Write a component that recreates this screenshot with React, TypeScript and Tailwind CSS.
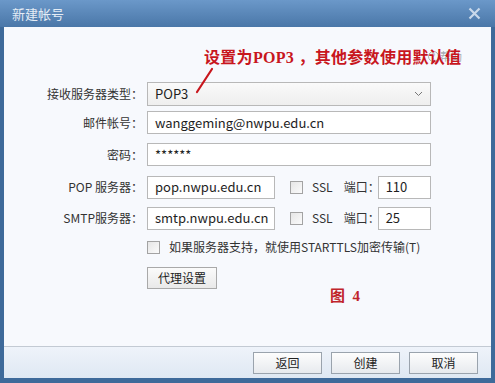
import React from 'react';

const cjk = { fontFamily: '"Noto Sans CJK SC", "Noto Sans", sans-serif' };
const serif = { fontFamily: '"Liberation Serif", "Noto Sans CJK SC", serif' };

function Checkbox() {
  return (
    <span className="inline-block w-[13px] h-[13px] border border-[#a3a3a3] bg-gradient-to-br from-[#e6e6e6] to-[#fbfbfb] shrink-0" />
  );
}

function Field({ value, className = '' }: { value: string; className?: string }) {
  return (
    <div
      className={`h-[23px] border border-[#b8b8b8] bg-white flex items-center px-[7px] text-[13px] text-[#1e1e1e] ${className}`}
    >
      {value}
    </div>
  );
}

function Label({ children }: { children: React.ReactNode }) {
  return (
    <div className="w-[143px] shrink-0 pr-[4px] text-right text-[12px] text-[#333]">{children}</div>
  );
}

function ServerRow({ label, host, port, className = '' }: { label: string; host: string; port: string; className?: string }) {
  return (
    <div className={`flex items-center ${className}`}>
      <Label>{label}</Label>
      <Field value={host} className="w-[128px]" />
      <div className="ml-[15px]">
        <Checkbox />
      </div>
      <span className="ml-[9px] text-[12px] text-[#333]">SSL</span>
      <span className="ml-[11px] text-[12px] text-[#333]">端口：</span>
      <Field value={port} className="-ml-[2px] w-[53px]" />
    </div>
  );
}

export default function App() {
  return (
    <div className="relative w-[495px] h-[383px] flex flex-col bg-[#3e6a9a] overflow-hidden" style={cjk}>
      <div className="h-[27px] shrink-0 flex items-center justify-between pl-[12px] pr-[14px] bg-gradient-to-b from-[#6b98c9] to-[#4a77a8]">
        <span className="text-[13px] text-[#e4ecf5]">新建帐号</span>
        <svg width="13" height="13" viewBox="0 0 13 13">
          <path d="M1.5 1.5 L11.5 11.5 M11.5 1.5 L1.5 11.5" stroke="#c9d8ea" strokeWidth="2.2" />
        </svg>
      </div>
      <div className="flex-1 mx-[4px] mb-[5px] flex flex-col">
        <div className="flex-1 bg-[#f7f9fd] pt-[55px]">
          <div className="flex items-center">
            <Label>接收服务器类型：</Label>
            <div className="w-[284px] h-[24px] border border-[#b8b8b8] bg-gradient-to-b from-[#fafafa] to-[#eeeeee] flex items-center justify-between px-[7px] text-[13px] text-[#1e1e1e]">
              <span>POP3</span>
              <svg width="9" height="6" viewBox="0 0 9 6">
                <path d="M1 1 L4.5 4.5 L8 1" fill="none" stroke="#777" strokeWidth="1" />
              </svg>
            </div>
          </div>
          <div className="flex items-center mt-[5px]">
            <Label>邮件帐号：</Label>
            <Field value="wanggeming@nwpu.edu.cn" className="w-[284px]" />
          </div>
          <div className="flex items-center mt-[9px]">
            <Label>密码：</Label>
            <Field value="******" className="w-[284px]" />
          </div>
          <ServerRow label="POP 服务器：" host="pop.nwpu.edu.cn" port="110" className="mt-[9px]" />
          <ServerRow label="SMTP服务器：" host="smtp.nwpu.edu.cn" port="25" className="mt-[7px]" />
          <div className="flex items-center mt-[8px] pl-[143px]">
            <Checkbox />
            <span className="ml-[9px] text-[12px] text-[#333]">如果服务器支持，就使用STARTTLS加密传输(T)</span>
          </div>
          <div className="pl-[143px] mt-[11px]">
            <div className="w-[70px] h-[22px] border border-[#a9a9a9] bg-gradient-to-b from-[#fbfbfb] to-[#e9e9e9] flex items-center justify-center text-[12px] text-[#222]">
              代理设置
            </div>
          </div>
        </div>
        <div className="h-[32px] shrink-0 border-t border-[#c3cad3] bg-gradient-to-b from-[#eef3fa] to-[#dfe8f3] flex items-center justify-end gap-[9px] pr-[13px]">
          {['返回', '创建', '取消'].map((t) => (
            <div
              key={t}
              className="w-[69px] h-[22px] border border-[#9aa3ad] bg-gradient-to-b from-[#fdfdfd] to-[#e7eaee] flex items-center justify-center text-[12px] text-[#222]"
            >
              {t}
            </div>
          ))}
        </div>
      </div>

      {/* help link, partly covered by the annotation */}
      <div className="absolute left-[428px] top-[48px] flex items-center gap-[1px] text-[11px] text-[#a7aeb6]">
        <span className="w-[11px] h-[11px] rounded-full border border-[#a7aeb6] flex items-center justify-center text-[8px] leading-none">?</span>
        <span>帮助</span>
      </div>
      {/* annotation */}
      <div className="absolute left-[204px] top-[46px] text-[16px] font-bold text-[#c8161d] whitespace-nowrap tracking-[0.3px]" style={serif}>
        设置为POP3 ，其他参数使用默认值
      </div>
      <svg className="absolute left-[192px] top-[66px]" width="24" height="30" viewBox="0 0 24 30">
        <path d="M20 3 L5 26" stroke="#c8161d" strokeWidth="2.2" strokeLinecap="round" />
      </svg>
      <div className="absolute left-[330px] top-[285px] text-[15px] font-bold text-[#c0242b] whitespace-nowrap" style={serif}>
        图&nbsp;&nbsp;4
      </div>
    </div>
  );
}
